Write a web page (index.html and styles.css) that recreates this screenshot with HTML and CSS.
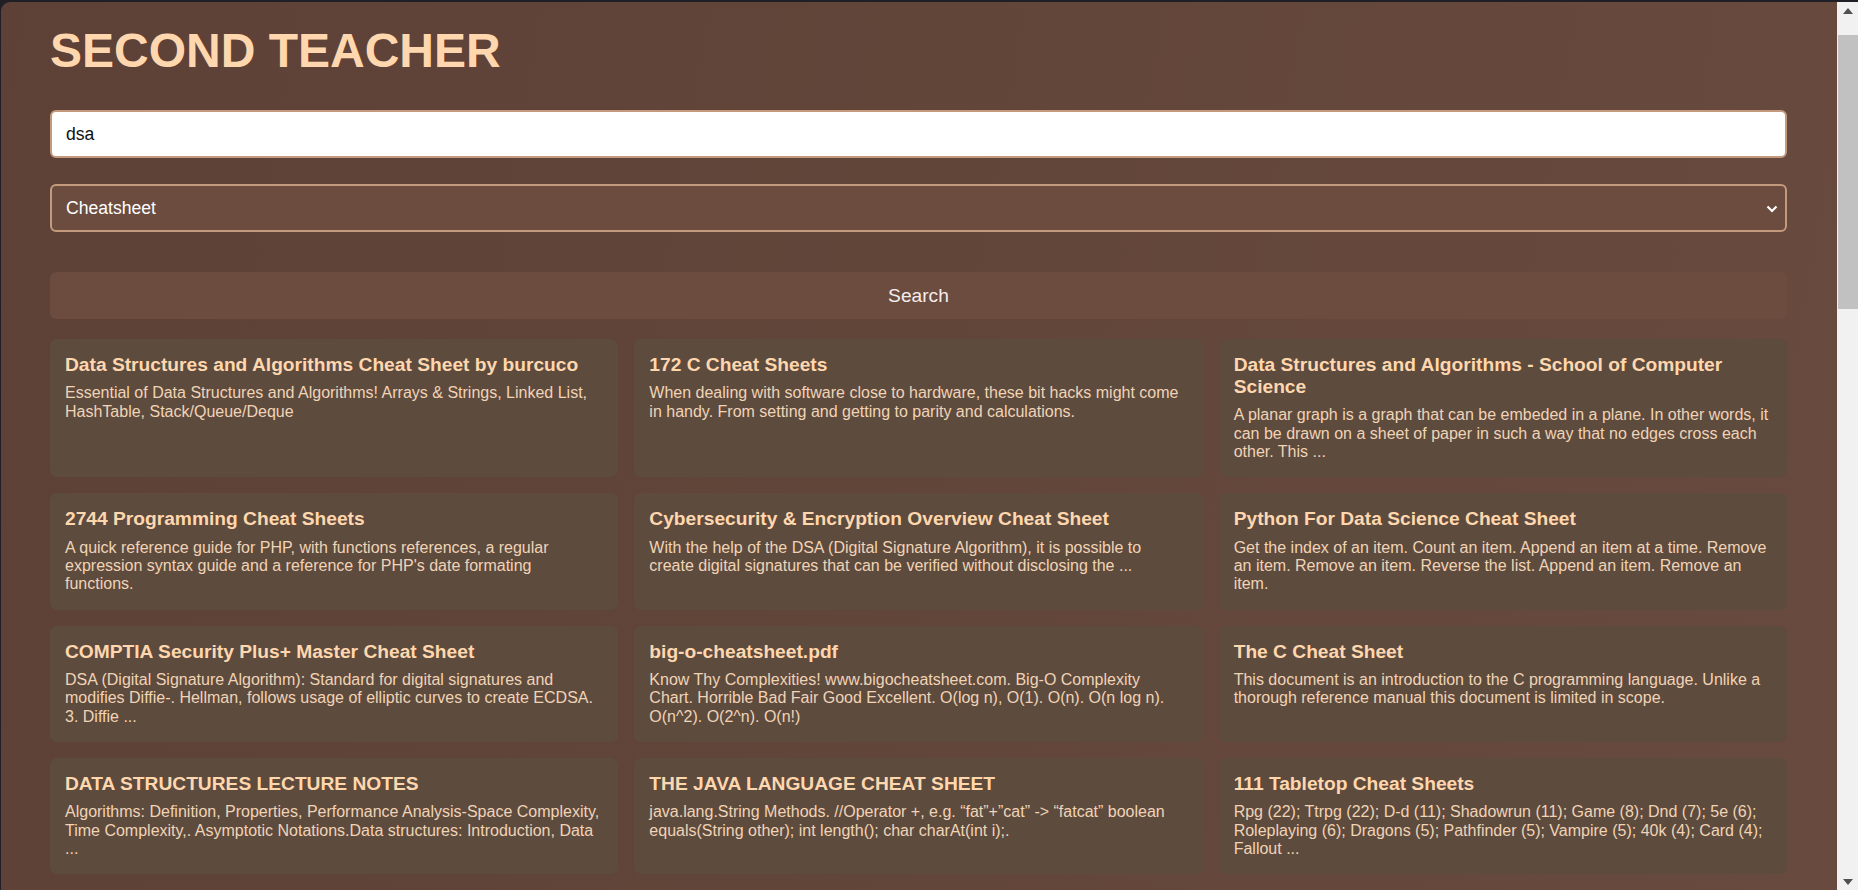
FILE: index.html
```html
<!DOCTYPE html>
<html lang="en">
<head>
<meta charset="utf-8">
<title>Second Teacher</title>
<link rel="stylesheet" href="styles.css">
</head>
<body>
<div class="window">
  <main class="page">
    <h1 class="brand">SECOND TEACHER</h1>
    <form class="search-form">
      <input class="field field-input" type="text" value="dsa">
      <div class="select-wrap">
        <select class="field field-select">
          <option>Cheatsheet</option>
        </select>
        <svg class="chevron" width="12" height="8" viewBox="0 0 12 8"><path d="M1.5 1.5 L6 6 L10.5 1.5" fill="none" stroke="#ffffff" stroke-width="2.2"/></svg>
      </div>
      <button class="search-btn" type="button">Search</button>
    </form>
    <section class="results">
      <article class="card">
        <h2 class="card-title">Data Structures and Algorithms Cheat Sheet by burcuco</h2>
        <p class="card-desc">Essential of Data Structures and Algorithms! Arrays &amp; Strings, Linked List, HashTable, Stack/Queue/Deque</p>
      </article>
      <article class="card">
        <h2 class="card-title">172 C Cheat Sheets</h2>
        <p class="card-desc">When dealing with software close to hardware, these bit hacks might come in handy. From setting and getting to parity and calculations.</p>
      </article>
      <article class="card">
        <h2 class="card-title">Data Structures and Algorithms - School of Computer Science</h2>
        <p class="card-desc">A planar graph is a graph that can be embeded in a plane. In other words, it can be drawn on a sheet of paper in such a way that no edges cross each other. This ...</p>
      </article>
      <article class="card">
        <h2 class="card-title">2744 Programming Cheat Sheets</h2>
        <p class="card-desc">A quick reference guide for PHP, with functions references, a regular expression syntax guide and a reference for PHP's date formating functions.</p>
      </article>
      <article class="card">
        <h2 class="card-title">Cybersecurity &amp; Encryption Overview Cheat Sheet</h2>
        <p class="card-desc">With the help of the DSA (Digital Signature Algorithm), it is possible to create digital signatures that can be verified without disclosing the ...</p>
      </article>
      <article class="card">
        <h2 class="card-title">Python For Data Science Cheat Sheet</h2>
        <p class="card-desc">Get the index of an item. Count an item. Append an item at a time. Remove an item. Remove an item. Reverse the list. Append an item. Remove an item.</p>
      </article>
      <article class="card">
        <h2 class="card-title">COMPTIA Security Plus+ Master Cheat Sheet</h2>
        <p class="card-desc">DSA (Digital Signature Algorithm): Standard for digital signatures and modifies Diffie-. Hellman, follows usage of elliptic curves to create ECDSA. 3. Diffie ...</p>
      </article>
      <article class="card">
        <h2 class="card-title">big-o-cheatsheet.pdf</h2>
        <p class="card-desc">Know Thy Complexities! www.bigocheatsheet.com. Big-O Complexity Chart. Horrible Bad Fair Good Excellent. O(log n), O(1). O(n). O(n log n). O(n^2). O(2^n). O(n!)</p>
      </article>
      <article class="card">
        <h2 class="card-title">The C Cheat Sheet</h2>
        <p class="card-desc">This document is an introduction to the C programming language. Unlike a thorough reference manual this document is limited in scope.</p>
      </article>
      <article class="card">
        <h2 class="card-title">DATA STRUCTURES LECTURE NOTES</h2>
        <p class="card-desc">Algorithms: Definition, Properties, Performance Analysis-Space Complexity, Time Complexity,. Asymptotic Notations.Data structures: Introduction, Data ...</p>
      </article>
      <article class="card">
        <h2 class="card-title">THE JAVA LANGUAGE CHEAT SHEET</h2>
        <p class="card-desc">java.lang.String Methods. //Operator +, e.g. “fat”+”cat” -&gt; “fatcat” boolean equals(String other); int length(); char charAt(int i);.</p>
      </article>
      <article class="card">
        <h2 class="card-title">111 Tabletop Cheat Sheets</h2>
        <p class="card-desc">Rpg (22); Ttrpg (22); D-d (11); Shadowrun (11); Game (8); Dnd (7); 5e (6); Roleplaying (6); Dragons (5); Pathfinder (5); Vampire (5); 40k (4); Card (4); Fallout ...</p>
      </article>
    </section>
  </main>
  <div class="scrollbar">
    <div class="sb-arrow"><svg width="10" height="6" viewBox="0 0 10 6"><path d="M0 6 L5 0 L10 6 Z" fill="#505050"/></svg></div>
    <div class="sb-track"><div class="sb-thumb"></div></div>
    <div class="sb-arrow"><svg width="10" height="6" viewBox="0 0 10 6"><path d="M0 0 L5 6 L10 0 Z" fill="#505050"/></svg></div>
  </div>
</div>
</body>
</html>
```

FILE: styles.css
```css
* { box-sizing: border-box; }

html, body {
  height: 100%;
}

body {
  margin: 0;
  background: #1f1f25;
  overflow: hidden;
  font-family: "Liberation Sans", Arial, sans-serif;
}

.window {
  display: flex;
  height: calc(100vh - 2px);
  margin: 2px 0 0 1px;
  border-top-left-radius: 9px;
  overflow: hidden;
  background: linear-gradient(100deg, #5d4137 0%, #624539 45%, #684a3e 100%);
}

.page {
  flex: 1;
  min-width: 0;
  overflow: hidden;
  padding: 21px 50px 0 49px;
}

.brand {
  margin: 0 0 32px;
  font-size: 48px;
  font-weight: bold;
  color: #ffd7ae;
  line-height: normal;
}

.search-form {
  display: flex;
  flex-direction: column;
}

.field {
  display: block;
  width: 100%;
  height: 48px;
  border: 2px solid #c39a7e;
  border-radius: 6px;
  padding: 0 14px;
  font-family: "Liberation Sans", Arial, sans-serif;
  font-size: 17.6px;
  outline: none;
}

.field-input {
  background: #ffffff;
  color: #111111;
  margin-bottom: 26px;
}

.select-wrap {
  position: relative;
  margin-bottom: 40px;
}

.field-select {
  appearance: none;
  -webkit-appearance: none;
  background: #6b4c3f;
  color: #ffffff;
}

.chevron {
  position: absolute;
  right: 9px;
  top: 21px;
}

.search-btn {
  display: block;
  width: 100%;
  height: 47px;
  border: none;
  border-radius: 6px;
  background: #6b4c3f;
  color: #f4eded;
  font-family: "Liberation Sans", Arial, sans-serif;
  font-size: 19.2px;
  margin-bottom: 20px;
}

.results {
  display: grid;
  grid-template-columns: repeat(3, 1fr);
  gap: 16px;
}

.card {
  background: #5d4b3e;
  border-radius: 7px;
  padding: 15px 15px 16px;
}

.card-title {
  margin: 0 0 8px;
  font-size: 19.2px;
  font-weight: bold;
  line-height: 22.1px;
  color: #ffd7ae;
}

.card-desc {
  margin: 0;
  font-size: 16px;
  line-height: 18.4px;
  color: #f1d3b6;
}

.scrollbar {
  width: 21px;
  flex: none;
  display: flex;
  flex-direction: column;
  background: #f1f1f1;
}

.sb-arrow {
  height: 17px;
  display: flex;
  align-items: center;
  justify-content: center;
  flex: none;
}

.sb-track {
  flex: 1;
  padding: 16px 0 0 1px;
}

.sb-thumb {
  height: 274px;
  background: #c1c1c1;
}
```
